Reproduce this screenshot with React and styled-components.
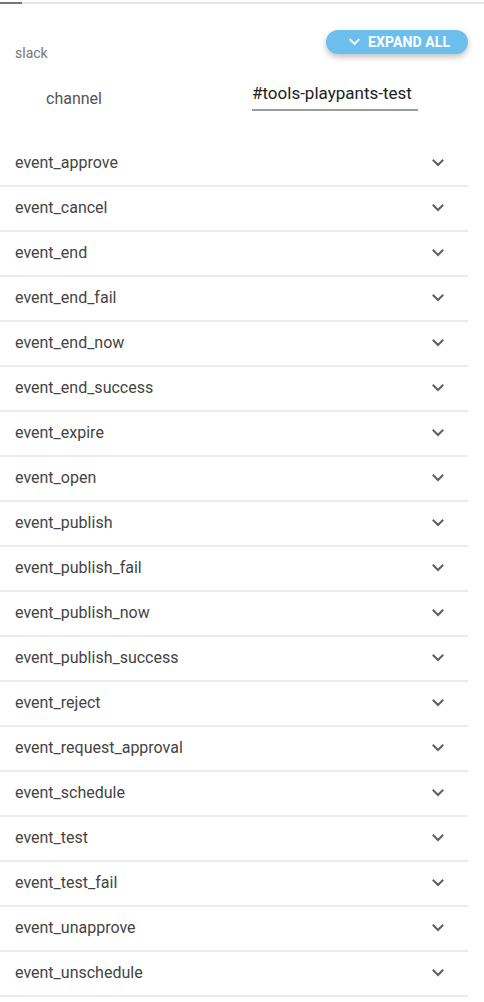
import styled, { createGlobalStyle } from 'styled-components';

const GlobalStyle = createGlobalStyle`
  body {
    margin: 0;
    background: #fff;
    font-family: Roboto, "Liberation Sans", sans-serif;
  }
`;

// barra de pestañas arriba
const TabStrip = styled.div`
  margin-top: 2px;
  height: 2px;
  background: #e6e6e6;
`;

const TabIndicator = styled.div`
  width: 22px;
  height: 2px;
  background: #777;
`;

const Header = styled.div`
  display: flex;
  justify-content: space-between;
  align-items: flex-start;
  padding: 26px 16px 0 15px;
`;

const SectionLabel = styled.div`
  margin-top: 15px;
  font-size: 14px;
  line-height: 16px;
  color: #757575;
`;

const ExpandButton = styled.button`
  display: flex;
  align-items: center;
  gap: 8px;
  height: 24px;
  width: 142px;
  padding: 0 0 0 23px;
  border: none;
  border-radius: 12px;
  background: #6cbfec;
  color: #fff;
  font-family: Roboto, "Liberation Sans", sans-serif;
  font-size: 14px;
  font-weight: 700;
  letter-spacing: 0.1px;
  box-shadow: 0 3px 6px rgba(0, 0, 0, 0.25);
  cursor: pointer;
`;

const ChannelRow = styled.div`
  display: flex;
  align-items: flex-end;
  margin-top: 19px;
  padding-left: 46px;
`;

const FieldLabel = styled.div`
  width: 206px;
  padding-bottom: 2px;
  font-size: 16px;
  line-height: 20px;
  color: #555;
`;

const TextInput = styled.input`
  box-sizing: border-box;
  width: 166px;
  height: 31px;
  padding: 0 0 4px 0;
  border: none;
  border-bottom: 2px solid #9b9b9b;
  outline: none;
  font-family: Roboto, "Liberation Sans", sans-serif;
  font-size: 17px;
  color: #222;
`;

const EventList = styled.ul`
  list-style: none;
  margin: 31px 0 0 0;
  padding: 0;
  width: 468px;
`;

// fila de cada evento (45px con el borde)
const EventRow = styled.li`
  display: flex;
  align-items: center;
  justify-content: space-between;
  box-sizing: border-box;
  height: 45px;
  padding: 0 24px 2px 15px;
  border-bottom: 2px solid #ececec;
  font-size: 16px;
  color: #444;
`;

const Chevron = ({ color = '#5f5f5f', width = 12 }) => (
  <svg width={width} height="8" viewBox="0 0 12 8" fill="none">
    <path d="M1.5 1.5 L6 6 L10.5 1.5" stroke={color} strokeWidth="2" strokeLinecap="square" />
  </svg>
);

const events = [
  'event_approve',
  'event_cancel',
  'event_end',
  'event_end_fail',
  'event_end_now',
  'event_end_success',
  'event_expire',
  'event_open',
  'event_publish',
  'event_publish_fail',
  'event_publish_now',
  'event_publish_success',
  'event_reject',
  'event_request_approval',
  'event_schedule',
  'event_test',
  'event_test_fail',
  'event_unapprove',
  'event_unschedule',
];

const App = () => {
  return (
    <>
      <GlobalStyle />
      <TabStrip>
        <TabIndicator />
      </TabStrip>
      <Header>
        <SectionLabel>slack</SectionLabel>
        <ExpandButton>
          <Chevron color="#fff" width={11} />
          EXPAND ALL
        </ExpandButton>
      </Header>
      <ChannelRow>
        <FieldLabel>channel</FieldLabel>
        <TextInput defaultValue="#tools-playpants-test" />
      </ChannelRow>
      <EventList>
        {events.map((name) => (
          <EventRow key={name}>
            {name}
            <Chevron />
          </EventRow>
        ))}
      </EventList>
    </>
  );
};

export default App;
